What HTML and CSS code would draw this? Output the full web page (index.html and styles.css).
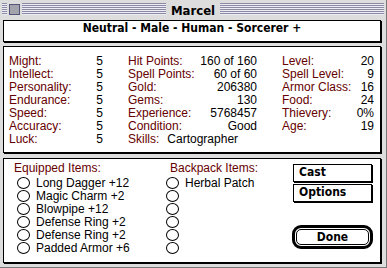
FILE: index.html
```html
<!DOCTYPE html>
<html>
<head>
<title>Marcel</title>
<link rel="stylesheet" href="styles.css">
</head>
<body>
<div class="window">
  <div class="titlebar">
    <span class="closebox"></span>
    <span class="title">Marcel</span>
  </div>

  <div class="panel header">Neutral - Male - Human - Sorcerer +</div>

  <div class="panel stats">
    <div class="col">
      <div class="stat"><span class="lbl">Might:</span><span>5</span></div>
      <div class="stat"><span class="lbl">Intellect:</span><span>5</span></div>
      <div class="stat"><span class="lbl">Personality:</span><span>5</span></div>
      <div class="stat"><span class="lbl">Endurance:</span><span>5</span></div>
      <div class="stat"><span class="lbl">Speed:</span><span>5</span></div>
      <div class="stat"><span class="lbl">Accuracy:</span><span>5</span></div>
      <div class="stat"><span class="lbl">Luck:</span><span>5</span></div>
    </div>
    <div class="col">
      <div class="stat"><span class="lbl">Hit Points:</span><span>160 of 160</span></div>
      <div class="stat"><span class="lbl">Spell Points:</span><span>60 of 60</span></div>
      <div class="stat"><span class="lbl">Gold:</span><span>206380</span></div>
      <div class="stat"><span class="lbl">Gems:</span><span>130</span></div>
      <div class="stat"><span class="lbl">Experience:</span><span>5768457</span></div>
      <div class="stat"><span class="lbl">Condition:</span><span>Good</span></div>
      <div class="stat skills"><span class="lbl">Skills:</span><span>Cartographer</span></div>
    </div>
    <div class="col">
      <div class="stat"><span class="lbl">Level:</span><span>20</span></div>
      <div class="stat"><span class="lbl">Spell Level:</span><span>9</span></div>
      <div class="stat"><span class="lbl">Armor Class:</span><span>16</span></div>
      <div class="stat"><span class="lbl">Food:</span><span>24</span></div>
      <div class="stat"><span class="lbl">Thievery:</span><span>0%</span></div>
      <div class="stat"><span class="lbl">Age:</span><span>19</span></div>
    </div>
  </div>

  <div class="panel items">
    <div class="list equipped">
      <div class="lbl heading">Equipped Items:</div>
      <div class="item"><span class="radio"></span>Long Dagger +12</div>
      <div class="item"><span class="radio"></span>Magic Charm +2</div>
      <div class="item"><span class="radio"></span>Blowpipe +12</div>
      <div class="item"><span class="radio"></span>Defense Ring +2</div>
      <div class="item"><span class="radio"></span>Defense Ring +2</div>
      <div class="item"><span class="radio"></span>Padded Armor +6</div>
    </div>
    <div class="list backpack">
      <div class="lbl heading">Backpack Items:</div>
      <div class="item"><span class="radio"></span>Herbal Patch</div>
      <div class="item"><span class="radio"></span></div>
      <div class="item"><span class="radio"></span></div>
      <div class="item"><span class="radio"></span></div>
      <div class="item"><span class="radio"></span></div>
      <div class="item"><span class="radio"></span></div>
    </div>
    <div class="buttons">
      <div class="btn">Cast</div>
      <div class="btn">Options</div>
      <div class="ring"><div class="done">Done</div></div>
    </div>
  </div>
</div>
</body>
</html>
```

FILE: styles.css
```css
body { margin: 0; background: #dddddd; font-family: "Liberation Sans", Arial, sans-serif; font-size: 12px; }

.window { width: 386px; height: 267px; background: #dddddd; border-right: 1px solid #777777; border-bottom: 1px solid #777777; }

/* title bar */
.titlebar { height: 18px; box-sizing: border-box; padding: 3px 2px; display: grid; grid-template-columns: 1fr auto 1fr; align-items: center;
            background: repeating-linear-gradient(#8a8aa6 0 1px, #ececf2 1px 2px) content-box, #dddddd; }
.closebox { justify-self: start; margin-left: 7px; width: 11px; height: 11px; box-sizing: border-box; border: 1px solid #55557a; background: #a3a3ad;
            box-shadow: 0 0 0 1px #dddddd, 0 0 0 2px #dddddd; }
.title { background: #dddddd; padding: 0 5px; height: 12px; line-height: 12px; font: bold 13px "DejaVu Sans Condensed", "DejaVu Sans", sans-serif; }

/* panels */
.panel { margin-left: 3px; width: 378px; box-sizing: border-box; border: 1px solid #000000; background: #ffffff; box-shadow: 1px 1px 0 #000000; }
.header { margin-top: 2px; height: 22px; line-height: 20px; text-align: center; font: bold 12px "DejaVu Sans Condensed", "DejaVu Sans", sans-serif; }

.stats { margin-top: 4px; height: 107px; padding: 8px 0 0 5px; display: grid; grid-template-columns: 94px 129px 92px; column-gap: 25px; align-content: start; }
.stat { display: flex; justify-content: space-between; line-height: 13px; }
.stat.skills { justify-content: flex-start; gap: 8px; }
.lbl { color: #660000; }

.items { margin-top: 5px; height: 105px; display: flex; }
.list { padding-top: 3px; }
.equipped { width: 152px; padding-left: 10px; }
.backpack { width: 112px; padding-left: 0; }
.heading { line-height: 13px; margin-bottom: 1px; }
.equipped .item { margin-left: 3px; }
.backpack .heading { margin-left: 4px; }
.item { display: flex; align-items: center; gap: 6px; height: 13px; }
.radio { width: 13px; height: 12px; box-sizing: border-box; border: 1px solid #000000; border-radius: 50%; background: #ffffff; }

.buttons { margin-left: 15px; padding-top: 5px; display: flex; flex-direction: column; gap: 2px; width: 79px; }
.btn { height: 18px; box-sizing: border-box; border: 1px solid #000000; box-shadow: 1px 1px 0 #000000; padding-left: 5px; line-height: 16px;
       font: bold 12px "DejaVu Sans Condensed", "DejaVu Sans", sans-serif; }
.ring { margin-top: 21px; margin-left: -1px; width: 81px; box-sizing: border-box; border: 3px solid #000000; border-radius: 9px; padding: 1px; }
.done { height: 16px; box-sizing: border-box; border: 1px solid #000000; border-radius: 5px; text-align: center; line-height: 14px;
        font: bold 12px "DejaVu Sans Condensed", "DejaVu Sans", sans-serif; }
```
